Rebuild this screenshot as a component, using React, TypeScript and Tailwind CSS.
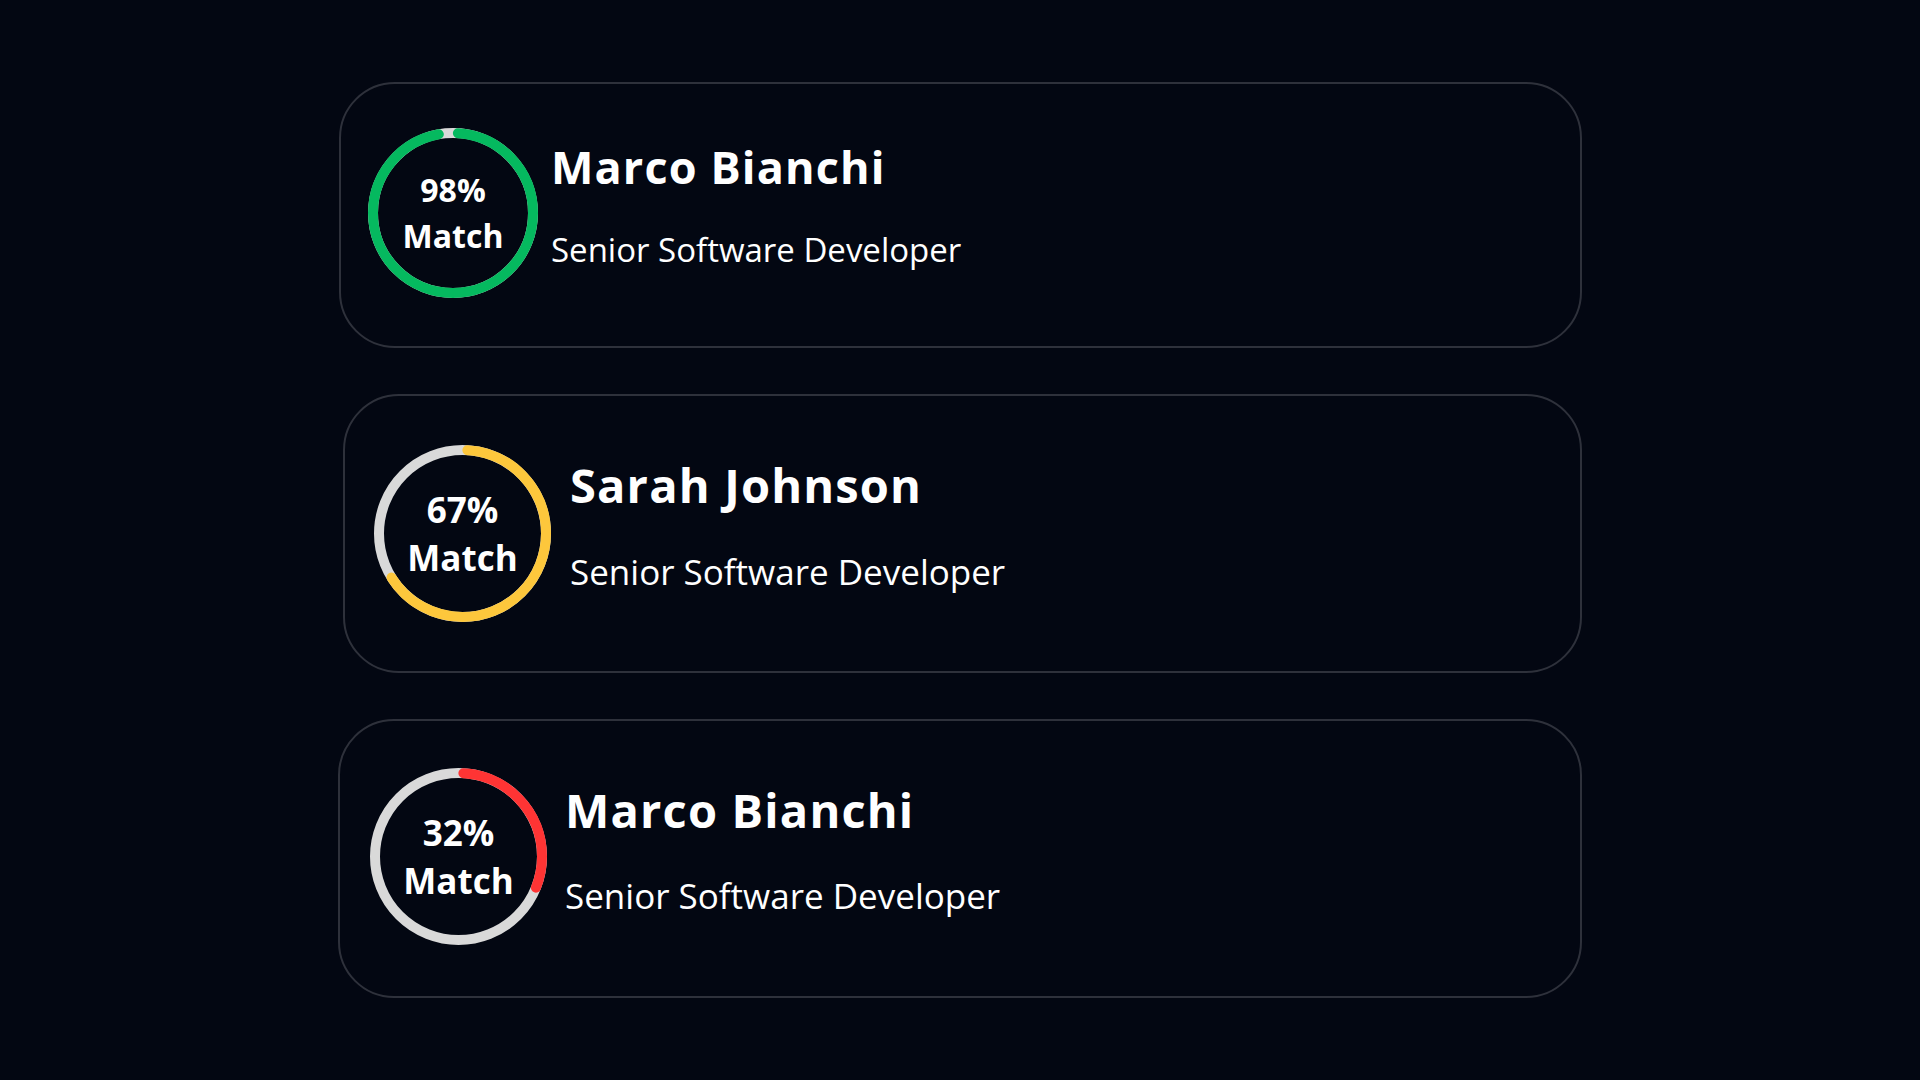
import React from "react";

type Candidate = {
  name: string;
  title: string;
  pct: number;
  color: string;
  size: number;
  cardClass: string;
  circleClass: string;
  ringTextClass: string;
  nameClass: string;
  titleClass: string;
  textBoxClass: string;
};

const candidates: Candidate[] = [
  {
    name: "Marco Bianchi",
    title: "Senior Software Developer",
    pct: 98,
    color: "#05b95f",
    size: 170,
    cardClass: "w-[1243px] h-[266px] pl-[27px] gap-[13px]",
    circleClass: "w-[170px] h-[170px] mb-[4px]",
    ringTextClass: "text-[32px] leading-[46px]",
    nameClass: "text-[45px] leading-[56px]",
    titleClass: "text-[33px] leading-[44px] mt-[33px]",
    textBoxClass: "mt-[55px]",
  },
  {
    name: "Sarah Johnson",
    title: "Senior Software Developer",
    pct: 67,
    color: "#fdc73c",
    size: 177,
    cardClass: "w-[1239px] h-[279px] pl-[29px] gap-[19px]",
    circleClass: "w-[177px] h-[177px]",
    ringTextClass: "text-[35px] leading-[48px]",
    nameClass: "text-[47px] leading-[58px]",
    titleClass: "text-[35px] leading-[46px] mt-[35px]",
    textBoxClass: "mt-[60px]",
  },
  {
    name: "Marco Bianchi",
    title: "Senior Software Developer",
    pct: 32,
    color: "#ff3434",
    size: 177,
    cardClass: "w-[1244px] h-[279px] pl-[30px] gap-[18px]",
    circleClass: "w-[177px] h-[177px] mb-[4px]",
    ringTextClass: "text-[35px] leading-[48px]",
    nameClass: "text-[47px] leading-[58px]",
    titleClass: "text-[35px] leading-[46px] mt-[34px]",
    textBoxClass: "mt-[60px]",
  },
];

function Ring({ c }: { c: Candidate }) {
  const stroke = 10;
  const r = (c.size - stroke) / 2;
  const circ = 2 * Math.PI * r;
  const len = Math.max(0, (c.pct / 100) * circ - stroke);
  return (
    <div className={`relative shrink-0 ${c.circleClass}`}>
      <svg
        className="absolute inset-0"
        width={c.size}
        height={c.size}
        viewBox={`0 0 ${c.size} ${c.size}`}
      >
        <circle
          cx={c.size / 2}
          cy={c.size / 2}
          r={r}
          fill="none"
          stroke="#d9d9d9"
          strokeWidth={stroke}
        />
        <circle
          cx={c.size / 2}
          cy={c.size / 2}
          r={r}
          fill="none"
          stroke={c.color}
          strokeWidth={stroke}
          strokeLinecap="round"
          strokeDasharray={`${len} ${circ}`}
          strokeDashoffset={-stroke / 2}
          transform={`rotate(-90 ${c.size / 2} ${c.size / 2})`}
        />
      </svg>
      <div
        className={`absolute inset-0 flex flex-col items-center justify-center font-bold text-white ${c.ringTextClass}`}
      >
        <span>{c.pct}%</span>
        <span>Match</span>
      </div>
    </div>
  );
}

export default function App() {
  return (
    <div
      className="min-h-screen w-full bg-[#030712] pt-[82px]"
      style={{ fontFamily: '"Open Sans", "Noto Sans", sans-serif' }}
    >
      <div className="mx-auto flex w-[1244px] flex-col items-end gap-[46px]">
        {candidates.map((c, i) => (
          <div
            key={i}
            className={`flex items-center rounded-[56px] border-2 border-[#2e313b] bg-[#030712] ${c.cardClass}`}
          >
            <Ring c={c} />
            <div className={`flex flex-col self-start text-white ${c.textBoxClass}`}>
              <div className={`font-bold tracking-wide ${c.nameClass}`}>{c.name}</div>
              <div className={`font-normal ${c.titleClass}`}>{c.title}</div>
            </div>
          </div>
        ))}
      </div>
    </div>
  );
}
